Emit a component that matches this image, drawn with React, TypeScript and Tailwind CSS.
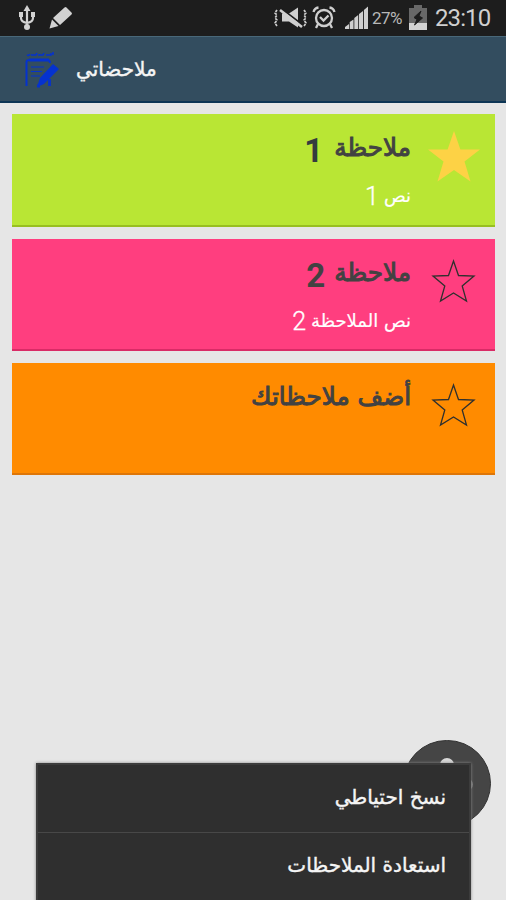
import type { ReactNode } from "react";

const ARABIC = "font-['DejaVu_Sans',sans-serif]";

type Note = {
  title: string;
  digit?: string;
  body?: string;
  digitClass?: string;
  card: string;
  starred?: boolean;
};

const notes: Note[] = [
  { title: "ملاحظة", digit: "1", body: "نص", digitClass: "text-[#343b3e] mr-[11px]", card: "mt-[11px] h-[113px] bg-[#b9e634] border-[#98bf20]", starred: true },
  { title: "ملاحظة", digit: "2", body: "نص الملاحظة", digitClass: "text-[#424242] mr-[9px]", card: "mt-3 h-[112px] bg-[#ff3e7f] border-[#d92b66]" },
  { title: "أضف ملاحظاتك", card: "mt-3 h-[112px] bg-[#ff8b00] border-[#de7608]" },
];

function UsbIcon() {
  return (
    <svg width="18" height="26" viewBox="0 0 18 26" fill="none" stroke="#d2d2d2" strokeWidth="2.2">
      <path d="M9 4v19M3 10v3q0 4 6 5M15 10v3q0 4-6 5" />
      <path d="M9 0l3.500 6h-7z" fill="#d2d2d2" stroke="none" />
      <path d="M1 7h4v5H1zM13 7h4v5h-4z" fill="#d2d2d2" stroke="none" />
      <circle cx="9" cy="22" r="3" fill="#d2d2d2" stroke="none" />
    </svg>
  );
}

function PencilIcon() {
  return (
    <svg width="24" height="24" viewBox="0 0 24 24" fill="#d2d2d2">
      <path d="M15.500 1.500q1-1 2 0l5 5q1 1 0 2L11 19 4 12z" />
      <path d="M3 13.500L9.500 20 0.500 22.500z" />
    </svg>
  );
}

function MuteIcon() {
  return (
    <svg width="34" height="22" viewBox="0 0 34 22" fill="none" stroke="#cfcfcf" strokeWidth="1.700">
      <path d="M3 3l-2 3 2 2-2 3 2 2-2 3 2 3M30 3l2 3-2 2 2 3-2 2 2 3-2 3" strokeDasharray="2.500 1" />
      <path d="M8 6.500h7l9-6v20l-9-6H8z" fill="#cfcfcf" stroke="none" />
      <path d="M6.500 1l21 16" stroke="#1d1d1d" strokeWidth="1.600" />
      <path d="M6 3l22 17" strokeWidth="2.600" />
    </svg>
  );
}

function AlarmIcon() {
  return (
    <svg width="24" height="24" viewBox="0 0 24 24" fill="none" stroke="#cfcfcf" strokeWidth="2.300">
      <circle cx="12" cy="12" r="8" />
      <path d="M1.500 6q1-4 5-4.500M22.500 6q-1-4-5-4.500M6 18l-2 4M18 18l2 4M8 11l3.500 3.500 5-5" />
    </svg>
  );
}

function SignalIcon() {
  return (
    <svg width="24" height="24" viewBox="0 0 24 24" fill="#cfcfcf">
      <path d="M0 23v-2l4-3v5zM4.700 23v-7l3.800-2.500V23zM9.300 23V12l3.900-3v14zM14 23V8l4-3v18zM18.900 23V4L23 .5V23z" />
    </svg>
  );
}

function BatteryIcon() {
  return (
    <svg width="18" height="26" viewBox="0 0 18 26">
      <path d="M5 0h8v3h5v15H0V3h5z" fill="#686868" />
      <path d="M0 18h18v7H0z" fill="#d2d2d2" />
      <path d="M12 6l-7 6.500 3 2L5.500 20l8-7-3.500-2z" fill="#1d1d1d" stroke="#1d1d1d" />
    </svg>
  );
}

function NotebookIcon() {
  return (
    <svg width="34" height="38" viewBox="0 0 34 38" fill="none" stroke="#0532cf" strokeWidth="2">
      <path d="M2 5q2 1 3-1m1 1h5l1-2m1 2h5l1-2m2 2h5V3m2 2V2" strokeWidth="1.600" />
      <path d="M1.500 36V12q0-2 3-2h18q2.500 0 2.500 3" strokeWidth="2" />
      <path d="M4 10h20M24.500 29v7M12 36h3" strokeWidth="2.800" />
      <path d="M6 17h13M6 21.500h11M6 26h9" strokeWidth="1.100" />
      <path d="M28 14l6 5-15 15-7 3 3-9z" fill="#0532cf" stroke="none" />
    </svg>
  );
}

function Star({ filled }: { filled?: boolean }) {
  return filled ? (
    <svg width="54" height="54" viewBox="0 0 54 54" fill="#fdd245">
      <path d="M27 1l6.400 18.500H53L37.500 31.500l6 20L27 40 10.500 51.500l6-20L1 19.500h19.600z" />
    </svg>
  ) : (
    <svg width="54" height="54" viewBox="0 0 54 54" fill="none" stroke="#30302e" strokeWidth="1.300">
      <path d="M26.500 6l5 14.500 15.500.5-11.800 10L39.500 46l-13-8-13 8 4.300-15L6 21l15.500-.5z" />
    </svg>
  );
}

function StatusBar() {
  return (
    <div className="flex h-9 items-center bg-[#1d1d1d] pl-[18px] pr-[14px] font-[Roboto,sans-serif] text-[#d0d0d0]">
      <UsbIcon />
      <span className="ml-[13px]"><PencilIcon /></span>
      <span className="ml-auto"><MuteIcon /></span>
      <span className="ml-[4px]"><AlarmIcon /></span>
      <span className="ml-[9px]"><SignalIcon /></span>
      <span className="ml-[3px] w-[33px] pt-[2px] text-[17px] tracking-[-0.6px] text-[#b8b8b8]">27%</span>
      <span className="ml-[4px]"><BatteryIcon /></span>
      <span className="ml-[8px] w-[57px] text-[24px] tracking-[-0.900px]">23:10</span>
    </div>
  );
}

function NoteCard({ note }: { note: Note }) {
  return (
    <div dir="rtl" className={`flex border-b-2 pr-[14px] ${note.card}`}>
      <div className="mt-4 h-[54px] w-[54px]"><Star filled={note.starred} /></div>
      <div className="mr-4">
        <div className="flex h-[52px] items-start pt-[14px] text-[#424242]">
          <span className={`${ARABIC} text-[24.700px] leading-10 [-webkit-text-stroke-width:1px]`}>{note.title}</span>
          {note.digit && <span className={`pt-[3px] font-[Roboto,sans-serif] text-[33px] font-bold leading-10 ${note.digitClass}`}>{note.digit}</span>}
        </div>
        {note.body && (
          <div className="flex items-start gap-[5px] pt-[14px] text-white">
            <span className={`${ARABIC} text-[18px] leading-8 [-webkit-text-stroke-width:0.2px]`}>{note.body}</span>
            <span className="pt-px font-[Roboto,sans-serif] text-[25px] font-light leading-8 [-webkit-text-stroke-width:0.3px]">{note.digit}</span>
          </div>
        )}
      </div>
    </div>
  );
}

function MenuItem({ children }: { children: ReactNode }) {
  return (
    <div dir="rtl" className={`${ARABIC} flex h-[68px] items-center border-b border-[#484848] pr-[23px] pb-1 text-[20px] text-[#f5f5f5] [-webkit-text-stroke-width:0.4px]`}>
      {children}
    </div>
  );
}

export default function App() {
  return (
    <div className="relative h-[900px] w-[506px] overflow-hidden bg-[#e6e6e6]">
      <StatusBar />
      <header className="flex h-[67px] items-center border-t border-b-2 border-t-[#496879] border-b-[#0d3555] bg-[#334d5f] pl-[25px]">
        <NotebookIcon />
        <h1 dir="rtl" className={`${ARABIC} ml-[17px] pb-px text-[20px] text-[#f5f5f5] [-webkit-text-stroke-width:0.4px]`}>ملاحضاتي</h1>
      </header>
      <main className="pl-3 pr-[11px]">
        {notes.map((note, i) => <NoteCard key={i} note={note} />)}
      </main>

      {/* add button, partly under the menu */}
      <div className="absolute left-[403px] top-[740px] h-[87px] w-[88px] rounded-full border border-[#333] bg-[#454545]">
        <span className="absolute left-[36px] top-[17px] h-[52px] w-[14px] rounded-full bg-[#d9d9d9]" />
        <span className="absolute left-[18px] top-[37px] h-[13px] w-[51px] rounded-full bg-[#777]" />
      </div>
      <div className="absolute left-[36px] top-[763px] h-[140px] w-[435px] border-2 border-[#3c3c3c] bg-[#2f2f2f] shadow-[0_0_3px_#888]">
        <MenuItem>نسخ احتياطي</MenuItem>
        <MenuItem>استعادة الملاحظات</MenuItem>
      </div>
    </div>
  );
}
